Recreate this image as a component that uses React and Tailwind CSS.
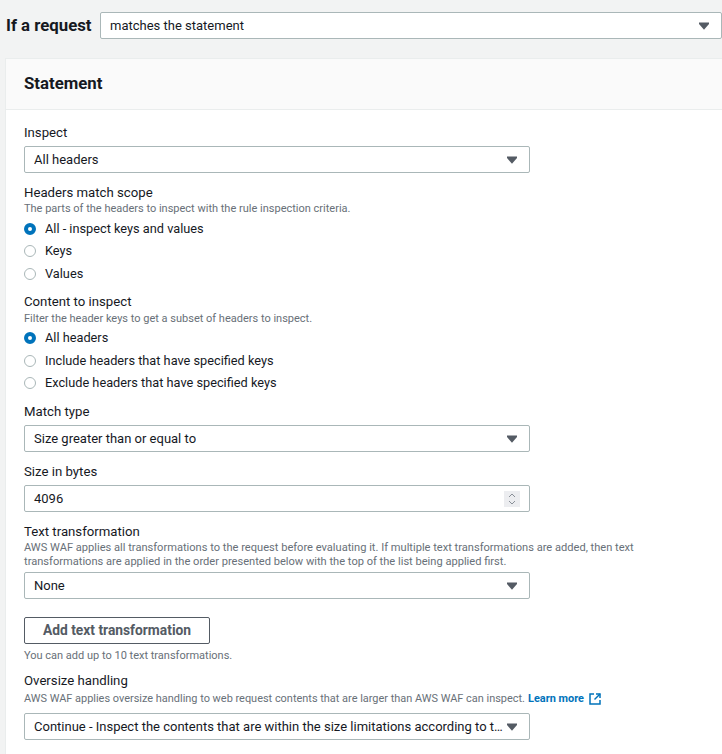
import React from "react";

const Arrow = () => (
  <svg width="10" height="8" viewBox="0 0 10 8" className="shrink-0">
    <path d="M0 0.5 H10 V2 L5 7.8 L0 2 Z" fill="#545b64" />
  </svg>
);

const Select = ({ children, className = "" }) => (
  <div className={`flex h-[27px] w-[506px] items-center justify-between gap-[2px] rounded-[2px] border border-[#aab7b8] bg-white pl-[9px] pr-[12px] text-[13px] leading-[20px] text-[#16191f] ${className}`}>
    <span className="truncate">{children}</span>
    <Arrow />
  </div>
);

const Radio = ({ checked, label, className = "" }) => (
  <div className={`flex h-[22px] items-center gap-[9px] text-[12.75px] leading-[20px] text-[#16191f] ${className}`}>
    {checked ? (
      <span className="h-3 w-3 rounded-full border-[4px] border-[#0073bb] bg-white" />
    ) : (
      <span className="h-3 w-3 rounded-full border border-[#aab7b8] bg-white" />
    )}
    <span>{label}</span>
  </div>
);

const Label = ({ children, className = "" }) => (
  <div className={`text-[13.2px] leading-[18px] text-[#16191f] ${className}`}>{children}</div>
);

const Desc = ({ children, className = "", size = "text-[11px]" }) => (
  <div className={`${size} leading-[14px] text-[#687078] ${className}`}>{children}</div>
);

export default function App() {
  return (
    <div className="h-[754px] w-[722px] overflow-hidden bg-[#f2f3f3] font-['Roboto',sans-serif]">
      <div className="flex h-[58px] items-start pl-[6px] pt-[12px]">
        <div className="flex h-[27px] w-[94px] items-center whitespace-nowrap text-[16.8px] font-bold text-[#16191f]">If a request</div>
        <div className="flex h-[27px] flex-1 items-center justify-between rounded-[2px] border border-[#aab7b8] bg-white pl-[9px] pr-[12px] text-[13px] text-[#16191f]">
          <span>matches the statement</span>
          <Arrow />
        </div>
      </div>
      <div className="ml-[5px] h-[696px] border-l border-t border-[#eaeded] bg-white">
        <div className="flex h-[51px] items-center border-b border-[#eaeded] bg-[#fafafa] pl-[18px] text-[16.8px] font-bold text-[#16191f]">
          Statement
        </div>
        <div className="pl-[18px] pt-[14px]">
          <Label>Inspect</Label>
          <Select className="mt-[4px]">All headers</Select>
          <Label className="mt-[11px]">Headers match scope</Label>
          <Desc>The parts of the headers to inspect with the rule inspection criteria.</Desc>
          <div className="mt-[2px]">
            <Radio checked label="All - inspect keys and values" />
            <Radio label="Keys" />
            <Radio label="Values" className="mt-[1px]" />
          </div>
          <Label className="mt-[8px]">Content to inspect</Label>
          <Desc className="mt-[1px]">Filter the header keys to get a subset of headers to inspect.</Desc>
          <div className="mt-[1px]">
            <Radio checked label="All headers" />
            <Radio label="Include headers that have specified keys" className="mt-[1px]" />
            <Radio label="Exclude headers that have specified keys" />
          </div>
          <Label className="mt-[9px]">Match type</Label>
          <Select className="mt-[4px]">Size greater than or equal to</Select>
          <Label className="mt-[11px]">Size in bytes</Label>
          <div className="mt-[4px] flex h-[27px] w-[506px] items-center justify-between rounded-[2px] border border-[#aab7b8] bg-white pl-[9px] pr-[9px] text-[13px] text-[#16191f]">
            <span>4096</span>
            <span className="flex h-[16px] w-[16px] items-center justify-center bg-[#ecedf0]">
              <svg width="10" height="14" viewBox="0 0 10 14" fill="none" stroke="#8a9098" strokeWidth="1">
                <path d="M2 5 L5 2 L8 5" />
                <path d="M2 9 L5 12 L8 9" />
              </svg>
            </span>
          </div>
          <Label className="mt-[11px]">Text transformation</Label>
          <Desc className="w-[640px]" size="text-[11.1px]">
            AWS WAF applies all transformations to the request before evaluating it. If multiple text transformations are added, then text transformations are applied in the order presented below with the top of the list being applied first.
          </Desc>
          <Select className="mt-[3px]">None</Select>
          <button className="mt-[18px] block h-[27px] w-[186px] rounded-[2px] border border-[#545b64] bg-white text-[13.8px] font-bold text-[#545b64]">
            Add text transformation
          </button>
          <Desc className="mt-[5px]">You can add up to 10 text transformations.</Desc>
          <Label className="mt-[9px]">Oversize handling</Label>
          <Desc className="mt-[2px] flex items-center" size="text-[10.95px]">
            <span>AWS WAF applies oversize handling to web request contents that are larger than AWS WAF can inspect.</span>
            <a className="ml-[3px] font-bold text-[#0073bb]">Learn more</a>
            <svg width="12" height="12" viewBox="0 0 12 12" fill="none" stroke="#0073bb" strokeWidth="1.5" className="ml-[5px]">
              <path d="M5 1 H1 V11 H11 V7" />
              <path d="M7 1 H11 V5" />
              <path d="M11 1 L5.5 6.5" />
            </svg>
          </Desc>
          <Select className="mt-[7px]">Continue - Inspect the contents that are within the size limitations according to the selected option</Select>
        </div>
      </div>
    </div>
  );
}
